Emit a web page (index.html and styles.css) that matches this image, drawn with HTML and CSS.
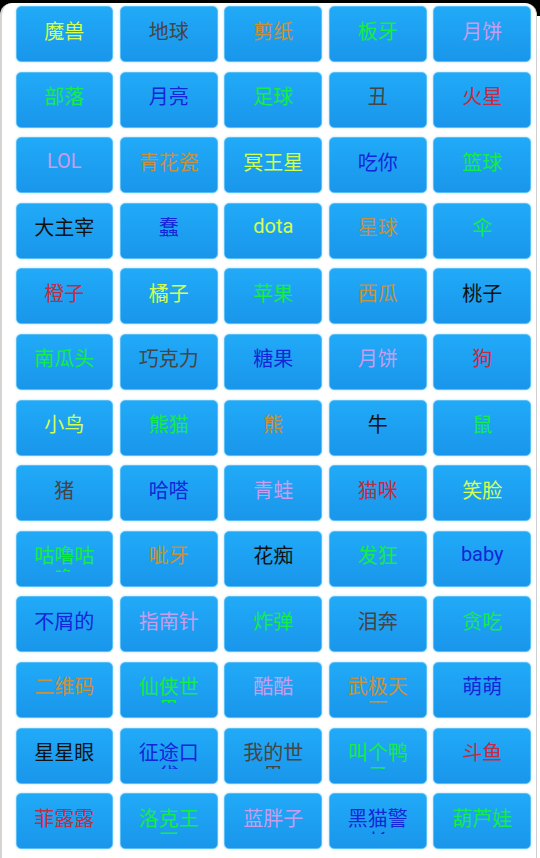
FILE: index.html
```html
<!DOCTYPE html>
<html lang="zh-CN">
<head>
<meta charset="utf-8">
<title>表情</title>
<link rel="stylesheet" href="styles.css">
</head>
<body>
<div class="screen">
  <div class="grid">
    <div class="btn"><span class="lbl c-y">魔兽</span></div>
    <div class="btn"><span class="lbl c-d">地球</span></div>
    <div class="btn"><span class="lbl c-t">剪纸</span></div>
    <div class="btn"><span class="lbl c-g">板牙</span></div>
    <div class="btn"><span class="lbl c-l">月饼</span></div>

    <div class="btn"><span class="lbl c-g">部落</span></div>
    <div class="btn"><span class="lbl c-b">月亮</span></div>
    <div class="btn"><span class="lbl c-g">足球</span></div>
    <div class="btn"><span class="lbl c-d">丑</span></div>
    <div class="btn"><span class="lbl c-r">火星</span></div>

    <div class="btn"><span class="lbl latin c-l">LOL</span></div>
    <div class="btn"><span class="lbl c-t">青花瓷</span></div>
    <div class="btn"><span class="lbl c-y">冥王星</span></div>
    <div class="btn"><span class="lbl c-b">吃你</span></div>
    <div class="btn"><span class="lbl c-g">篮球</span></div>

    <div class="btn"><span class="lbl c-k">大主宰</span></div>
    <div class="btn"><span class="lbl c-b">蠢</span></div>
    <div class="btn"><span class="lbl latin c-y">dota</span></div>
    <div class="btn"><span class="lbl c-t">星球</span></div>
    <div class="btn"><span class="lbl c-g">伞</span></div>

    <div class="btn"><span class="lbl c-r">橙子</span></div>
    <div class="btn"><span class="lbl c-y">橘子</span></div>
    <div class="btn"><span class="lbl c-g">苹果</span></div>
    <div class="btn"><span class="lbl c-t">西瓜</span></div>
    <div class="btn"><span class="lbl c-k">桃子</span></div>

    <div class="btn"><span class="lbl c-g">南瓜头</span></div>
    <div class="btn"><span class="lbl c-d">巧克力</span></div>
    <div class="btn"><span class="lbl c-b">糖果</span></div>
    <div class="btn"><span class="lbl c-l">月饼</span></div>
    <div class="btn"><span class="lbl c-r">狗</span></div>

    <div class="btn"><span class="lbl c-y">小鸟</span></div>
    <div class="btn"><span class="lbl c-g">熊猫</span></div>
    <div class="btn"><span class="lbl c-t">熊</span></div>
    <div class="btn"><span class="lbl c-k">牛</span></div>
    <div class="btn"><span class="lbl c-g">鼠</span></div>

    <div class="btn"><span class="lbl c-d">猪</span></div>
    <div class="btn"><span class="lbl c-b">哈嗒</span></div>
    <div class="btn"><span class="lbl c-l">青蛙</span></div>
    <div class="btn"><span class="lbl c-r">猫咪</span></div>
    <div class="btn"><span class="lbl c-y">笑脸</span></div>

    <div class="btn"><span class="lbl clip c-g">咕噜咕噜</span></div>
    <div class="btn"><span class="lbl c-t">呲牙</span></div>
    <div class="btn"><span class="lbl c-k">花痴</span></div>
    <div class="btn"><span class="lbl c-g">发狂</span></div>
    <div class="btn"><span class="lbl latin c-b">baby</span></div>

    <div class="btn"><span class="lbl c-b">不屑的</span></div>
    <div class="btn"><span class="lbl c-l">指南针</span></div>
    <div class="btn"><span class="lbl c-g">炸弹</span></div>
    <div class="btn"><span class="lbl c-d">泪奔</span></div>
    <div class="btn"><span class="lbl c-g">贪吃</span></div>

    <div class="btn"><span class="lbl c-t">二维码</span></div>
    <div class="btn"><span class="lbl clip c-g">仙侠世界</span></div>
    <div class="btn"><span class="lbl c-l">酷酷</span></div>
    <div class="btn"><span class="lbl clip c-t">武极天下</span></div>
    <div class="btn"><span class="lbl c-b">萌萌</span></div>

    <div class="btn"><span class="lbl c-k">星星眼</span></div>
    <div class="btn"><span class="lbl clip c-b">征途口袋</span></div>
    <div class="btn"><span class="lbl clip c-d">我的世界</span></div>
    <div class="btn"><span class="lbl clip c-g">叫个鸭子</span></div>
    <div class="btn"><span class="lbl c-r">斗鱼</span></div>

    <div class="btn"><span class="lbl c-r">菲露露</span></div>
    <div class="btn"><span class="lbl clip c-g">洛克王国</span></div>
    <div class="btn"><span class="lbl c-l">蓝胖子</span></div>
    <div class="btn"><span class="lbl clip c-b">黑猫警长</span></div>
    <div class="btn"><span class="lbl c-g">葫芦娃</span></div>
  </div>
</div>
</body>
</html>
```
FILE: styles.css
```css
html, body {
  margin: 0;
  padding: 0;
}
body {
  width: 540px;
  height: 858px;
  overflow: hidden;
  background: linear-gradient(#000 0, #000 16px, #fff 16px);
  font-family: "Noto Sans CJK SC", Roboto, sans-serif;
}
.screen {
  margin: 3px 3px 0 0;
  height: 855px;
  box-sizing: border-box;
  background: #fff;
  border-radius: 12px 12px 0 0;
  border-left: 2px solid #d4d4d4;
  border-right: 1px solid #cfcfcf;
  padding: 3px 0 0 13.5px;
}
.grid {
  display: grid;
  grid-template-columns: repeat(5, 97.6px);
  grid-auto-rows: 56px;
  column-gap: 6.9px;
  row-gap: 9.6px;
}
.btn {
  box-sizing: border-box;
  border-radius: 5px;
  background: linear-gradient(#21aaf8, #1996eb);
  border: 1px solid #57bff6;
  box-shadow: 0 0 2px rgba(40, 160, 240, 0.45);
  display: flex;
  justify-content: center;
  align-items: flex-start;
  padding-top: 11.5px;
}
.lbl {
  display: block;
  width: 72px;
  text-align: center;
  font-size: 20px;
  line-height: 23px;
}
.clip {
  max-height: 28.5px;
  overflow: hidden;
}
.latin {
  font-family: Roboto, "Noto Sans CJK SC", sans-serif;
}
.c-y { color: #d4ff52; }
.c-g { color: #14ec48; }
.c-t { color: #c8913e; }
.c-l { color: #c99cee; }
.c-b { color: #1326d8; }
.c-d { color: #454545; }
.c-k { color: #111111; }
.c-r { color: #c22c42; }
```
